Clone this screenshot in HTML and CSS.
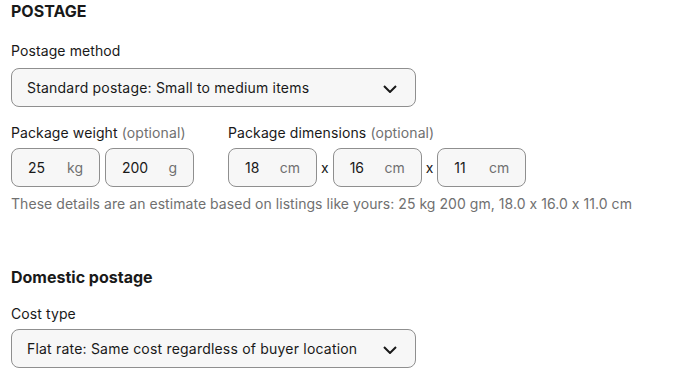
FILE: index.html
```html
<!DOCTYPE html>
<html lang="en">
<head>
    <meta charset="UTF-8">
    <meta name="viewport" content="width=device-width, initial-scale=1.0">
    <title>Postage</title>
    <link rel="stylesheet" href="styles.css">
</head>
<body>
    <div class="section">
        <h2 class="title">POSTAGE</h2>

        <div class="label">Postage method</div>
        <div class="select">
            <span>Standard postage: Small to medium items</span>
            <svg class="chevron" width="14" height="8" viewBox="0 0 14 8"><path d="M1 1l6 6 6-6" fill="none" stroke="#191919" stroke-width="2"/></svg>
        </div>

        <div class="package">
            <div class="group">
                <div class="label">Package weight <span class="muted">(optional)</span></div>
                <div class="fields">
                    <div class="box"><span>25</span><span class="unit">kg</span></div>
                    <div class="box"><span>200</span><span class="unit">g</span></div>
                </div>
            </div>
            <div class="group">
                <div class="label">Package dimensions <span class="muted">(optional)</span></div>
                <div class="fields dims">
                    <div class="box"><span>18</span><span class="unit">cm</span></div>
                    <span class="times">x</span>
                    <div class="box"><span>16</span><span class="unit">cm</span></div>
                    <span class="times">x</span>
                    <div class="box"><span>11</span><span class="unit">cm</span></div>
                </div>
            </div>
        </div>
        <p class="hint">These details are an estimate based on listings like yours: 25 kg 200 gm, 18.0 x 16.0 x 11.0 cm</p>
    </div>

    <div class="section domestic">
        <h3 class="subtitle">Domestic postage</h3>
        <div class="label">Cost type</div>
        <div class="select">
            <span>Flat rate: Same cost regardless of buyer location</span>
            <svg class="chevron" width="14" height="8" viewBox="0 0 14 8"><path d="M1 1l6 6 6-6" fill="none" stroke="#191919" stroke-width="2"/></svg>
        </div>
    </div>
</body>
</html>
```

FILE: styles.css
```css
body {
    font-family: Inter, "Open Sans", sans-serif;
    font-size: 14px;
    color: #191919;
    background-color: #fff;
    margin: 0;
    padding: 0 11px;
}
.title {
    font-size: 16px;
    font-weight: 700;
    line-height: 20px;
    margin: 1px 0 20px;
}
.subtitle {
    font-size: 16px;
    font-weight: 700;
    line-height: 20px;
    margin: 0 0 17px;
}
.label {
    line-height: 20px;
    margin-bottom: 7px;
    letter-spacing: 0.1px;
}
.muted {
    color: #707070;
}
.select {
    width: 405px;
    height: 39px;
    box-sizing: border-box;
    border: 1px solid #8f8f8f;
    border-radius: 8px;
    background-color: #f7f7f7;
    display: flex;
    align-items: center;
    justify-content: space-between;
    padding: 0 18px 0 15px;
    letter-spacing: 0.2px;
}
.chevron {
    margin-top: 2px;
}
.package {
    display: flex;
    gap: 34px;
    margin-top: 16px;
}
.package .label {
    margin-bottom: 5px;
}
.domestic .label {
    margin-bottom: 5px;
}
.fields {
    display: flex;
    align-items: center;
    gap: 5px;
}
.dims {
    gap: 4px;
}
.box {
    width: 89px;
    height: 39px;
    box-sizing: border-box;
    border: 1px solid #8f8f8f;
    border-radius: 8px;
    background-color: #f7f7f7;
    display: flex;
    align-items: center;
    justify-content: space-between;
    padding: 0 16px;
}
.unit {
    color: #707070;
}
.times {
    font-size: 14px;
}
.hint {
    color: #707070;
    line-height: 20px;
    margin: 7px 0 0;
    letter-spacing: 0.05px;
}
.domestic {
    margin-top: 53px;
}
```
